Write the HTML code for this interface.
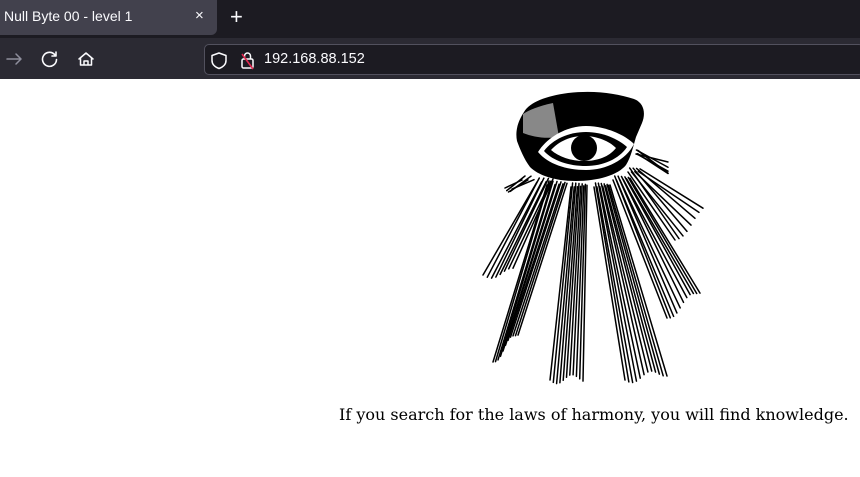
<!DOCTYPE html>
<html><head><meta charset="utf-8"><style>
*{margin:0;padding:0;box-sizing:border-box}
body{width:860px;height:477px;overflow:hidden;background:#fff;font-family:"Liberation Sans","DejaVu Sans",sans-serif;position:relative}
#tabs{position:absolute;left:0;top:0;width:860px;height:38px;background:#1c1b22}
#tab{position:absolute;left:0;top:0;width:217px;height:35px;background:#42414d;border-radius:0 0 6px 0}
#tab span{position:absolute;left:4px;top:8px;color:#fbfbfe;font-size:14px}
#tab b{position:absolute;left:195px;top:7px;color:#fbfbfe;font-weight:normal;font-size:15px}
#plus{position:absolute;left:230px;top:4px;color:#fbfbfe;font-size:22px}
#bar{position:absolute;left:0;top:38px;width:860px;height:41px;background:#2b2a33}
#url{position:absolute;left:204px;top:6px;width:660px;height:31px;background:#1c1b22;border:1px solid #52515e;border-radius:5px}
#url span{position:absolute;left:59px;top:6px;color:#fbfbfe;font-size:14.5px}
#cap{position:absolute;left:339px;top:405px;font-family:"DejaVu Serif",serif;font-size:16px;color:#000;white-space:nowrap}
</style></head><body>
<div id="tabs"><div id="tab"><span>Null Byte 00 - level 1</span><b>×</b></div><div id="plus">+</div></div>
<div id="bar">
<svg width="200" height="41" style="position:absolute;left:0;top:0" fill="none" stroke-linecap="round" stroke-linejoin="round">
<path d="M7 21h14M16 16l5 5-5 5" stroke="#8f8f9d" stroke-width="1.5"/>
<path d="M55 17a7 7 0 1 0 1.5 4.5M56 14v4h-4" stroke="#fbfbfe" stroke-width="1.6"/>
<path d="M79 21l7-6 7 6M80.5 20v7h11v-7M84 27v-4h4v4" stroke="#fbfbfe" stroke-width="1.5"/>
</svg>
<div id="url">
<svg width="60" height="31" style="position:absolute;left:0;top:0" fill="none" stroke-linejoin="round">
<path d="M14 8l7 2.5v5c0 4-3 6.5-7 8-4-1.5-7-4-7-8v-5z" stroke="#fbfbfe" stroke-width="1.5"/>
<rect x="37" y="14" width="11" height="9" rx="1.5" stroke="#fbfbfe" stroke-width="1.5"/>
<path d="M39.5 14v-3a3 3 0 0 1 6 0v3" stroke="#fbfbfe" stroke-width="1.5"/>
<path d="M37 9l11 15" stroke="#e22850" stroke-width="1.6"/>
</svg>
<span>192.168.88.152</span></div>
</div>
<svg id="eye" width="860" height="477" style="position:absolute;left:0;top:0">
<g id="rays" stroke="#000" stroke-width="1.5" stroke-linecap="round"></g>
<path d="M524 112c6-10 22-16 44-19 25-3 48 0 66 6 10 4 12 14 8 24l-6 14c-3 10-5 20-10 28-8 10-28 16-50 16s-38-6-46-14c-6-8-10-18-13-26-2-10 1-20 7-29z" fill="#000"/>
<path d="M523 114c6-4 16-8 30-11l6 34c-14 2-26 0-36-4z" fill="#888"/>
<path d="M538 152c10-16 30-26 48-26s38 8 48 18c-8 16-28 26-48 26s-38-6-48-18z" fill="#fff"/>
<path d="M544 151c9-12 25-19 42-19s32 7 41 15c-8 12-24 19-41 19s-33-5-42-15z" fill="#000" />
<path d="M551 150c8-9 20-14 33-14s25 5 32 12c-7 9-19 13-32 13s-25-4-33-11z" fill="#fff"/>
<circle cx="584" cy="148" r="13" fill="#000"/>
</svg>
<div id="cap">If you search for the laws of harmony, you will find knowledge.</div>
<script>
var g=document.getElementById('rays'),s='';
function b(x1a,x1b,y1,x2a,x2b,y2a,y2b,n){for(var i=0;i<n;i++){var t=i/(n-1);var ax=x1a+(x1b-x1a)*t;var bx=x2a+(x2b-x2a)*t,by=y2a+(y2b-y2a)*t+Math.sin(i*7)*4;s+='<line x1="'+ax+'" y1="'+(y1+Math.cos(i*3)*2)+'" x2="'+bx+'" y2="'+by+'"/>';}}
b(522,534,178,505,512,188,188,5);
b(537,553,180,483,513,275,272,8);
b(547,567,183,493,518,362,332,11);
b(571,587,185,550,583,380,378,11);
b(594,610,185,625,667,380,372,12);
b(613,630,178,667,700,318,290,11);
b(628,640,170,675,703,240,212,8);
b(636,638,152,668,668,162,175,6);
g.innerHTML=s;
</script>
</body></html>
